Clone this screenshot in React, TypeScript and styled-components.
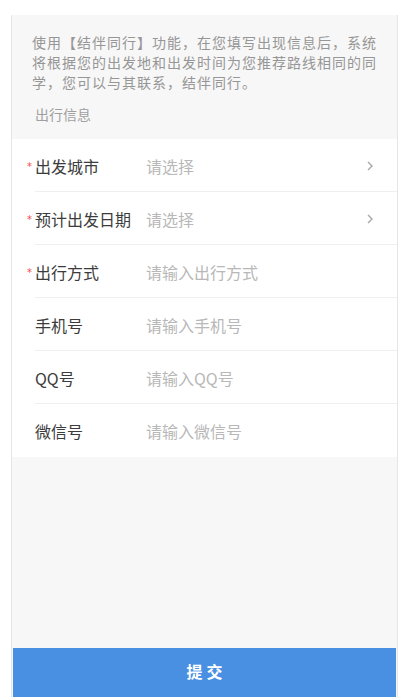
import React from 'react'
import styled, { createGlobalStyle } from 'styled-components'

const GlobalStyle = createGlobalStyle`
  html, body {
    margin: 0;
    padding: 0;
    background: #ffffff;
    font-family: "Noto Sans CJK SC", "Noto Sans", "Liberation Sans", sans-serif;
  }
  * {
    box-sizing: border-box;
  }
`

const Page = styled.div`
  height: 697px;
  padding: 15px 6px 0 11px;
`

const Panel = styled.div`
  display: flex;
  flex-direction: column;
  height: 100%;
  background: #f7f7f7;
  border-left: 1px solid #e6e6e6;
  border-right: 1px solid #e6e6e6;
`

const Intro = styled.div`
  padding: 17px 14px 15px 20px;
`

const Notice = styled.p`
  margin: 0;
  font-size: 14px;
  line-height: 20px;
  letter-spacing: 1px;
  color: #969696;
`

const SectionTitle = styled.div`
  margin-top: 12px;
  padding-left: 3px;
  font-size: 14px;
  line-height: 20px;
  color: #a0a0a0;
`

const FormList = styled.div`
  display: flex;
  flex-direction: column;
  background: #ffffff;
`

const Row = styled.div<{ $last?: boolean }>`
  position: relative;
  display: flex;
  align-items: center;
  height: 53px;
  padding-left: 15px;
  padding-right: 24px;

  &::after {
    content: '';
    display: ${(p) => (p.$last ? 'none' : 'block')};
    position: absolute;
    left: 23px;
    right: 0;
    bottom: 0;
    height: 1px;
    background: #efefef;
  }
`

const Label = styled.div`
  display: flex;
  align-items: center;
  width: 119px;
  flex-shrink: 0;
  font-size: 16px;
  color: #3c3c3c;
`

const Star = styled.span<{ $show: boolean }>`
  display: inline-block;
  width: 8px;
  font-family: "DejaVu Sans", sans-serif;
  font-size: 10px;
  line-height: 1;
  color: #f04a4a;
  visibility: ${(p) => (p.$show ? 'visible' : 'hidden')};
  transform: translateY(1px);
`

const Placeholder = styled.div`
  flex: 1;
  font-size: 16px;
  color: #b8b8b8;
`

const Chevron = styled.svg`
  width: 6px;
  height: 10px;
  flex-shrink: 0;
`

const Spacer = styled.div`
  flex: 1;
`

const SubmitButton = styled.button`
  height: 49px;
  margin: 0 1px;
  border: none;
  background: #4a90e2;
  color: #ffffff;
  font-family: inherit;
  font-size: 16px;
  font-weight: 700;
  letter-spacing: 4px;
  padding: 0 0 3px 4px;
`

const fields = [
  { label: '出发城市', placeholder: '请选择', required: true, select: true },
  { label: '预计出发日期', placeholder: '请选择', required: true, select: true },
  { label: '出行方式', placeholder: '请输入出行方式', required: true, select: false },
  { label: '手机号', placeholder: '请输入手机号', required: false, select: false },
  { label: 'QQ号', placeholder: '请输入QQ号', required: false, select: false },
  { label: '微信号', placeholder: '请输入微信号', required: false, select: false },
]

const App: React.FC = () => {
  return (
    <Page>
      <GlobalStyle />
      <Panel>
        <Intro>
          <Notice>
            使用【结伴同行】功能，在您填写出现信息后，系统将根据您的出发地和出发时间为您推荐路线相同的同学，您可以与其联系，结伴同行。
          </Notice>
          <SectionTitle>出行信息</SectionTitle>
        </Intro>
        <FormList>
          {fields.map((f, i) => (
            <Row key={f.label} $last={i === fields.length - 1}>
              <Label>
                <Star $show={f.required}>*</Star>
                {f.label}
              </Label>
              <Placeholder>{f.placeholder}</Placeholder>
              {f.select && (
                <Chevron viewBox="0 0 6 10">
                  <path d="M1 1l4 4-4 4" fill="none" stroke="#a8a8a8" strokeWidth="1.4" />
                </Chevron>
              )}
            </Row>
          ))}
        </FormList>
        <Spacer />
        <SubmitButton>提交</SubmitButton>
      </Panel>
    </Page>
  )
}

export default App
